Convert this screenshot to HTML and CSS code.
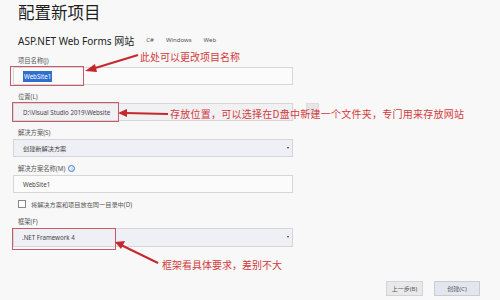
FILE: index.html
```html
<!DOCTYPE html>
<html lang="zh-CN">
<head>
    <meta charset="UTF-8">
    <title>配置新项目</title>
    <link rel="stylesheet" href="styles.css">
</head>
<body>
<div class="page">
    <h1 class="title">配置新项目</h1>
    <div class="subtitle">
        <span class="proj">ASP.NET Web Forms 网站</span>
        <span class="tag">C#</span>
        <span class="tag">Windows</span>
        <span class="tag">Web</span>
    </div>

    <div class="form">
        <div class="field">
            <div class="label">项目名称(J)</div>
            <div class="input"><span class="sel">WebSite1</span></div>
        </div>
        <div class="field">
            <div class="label">位置(L)</div>
            <div class="row">
                <div class="input gray">D:\Visual Studio 2019\Website</div>
                <div class="browse"></div>
            </div>
        </div>
        <div class="field">
            <div class="label">解决方案(S)</div>
            <div class="input select">创建新解决方案<i class="caret"></i></div>
        </div>
        <div class="field">
            <div class="label">解决方案名称(M) <span class="info">i</span></div>
            <div class="input">WebSite1</div>
        </div>
        <div class="check">
            <span class="box"></span>
            <span>将解决方案和项目放在同一目录中(D)</span>
        </div>
        <div class="field">
            <div class="label">框架(F)</div>
            <div class="input select tall">.NET Framework 4<i class="caret"></i></div>
        </div>
    </div>

    <div class="actions">
        <button class="btn back">上一步(B)</button>
        <button class="btn create">创建(C)</button>
    </div>

    <!-- annotations drawn over the screenshot -->
    <div class="frame f1"></div>
    <div class="frame f2"></div>
    <div class="frame f3"></div>
    <svg class="marks" width="500" height="300" viewBox="0 0 500 300">
        <g stroke="#c4272d" stroke-width="2" fill="#c4272d">
            <line x1="138" y1="55" x2="92" y2="69"/>
            <polygon points="85,71 95,64 97,72" stroke="none"/>
            <line x1="168" y1="114" x2="125" y2="113"/>
            <polygon points="118,113 127,109 127,117" stroke="none"/>
            <line x1="158" y1="263" x2="121" y2="245"/>
            <polygon points="115,242 125,241 121,249" stroke="none"/>
        </g>
    </svg>
    <div class="note n1">此处可以更改项目名称</div>
    <div class="note n2">存放位置，可以选择在D盘中新建一个文件夹，专门用来存放网站</div>
    <div class="note n3">框架看具体要求，差别不大</div>
</div>
</body>
</html>
```

FILE: styles.css
```css
*{
    margin: 0;
    padding: 0;
    box-sizing: border-box;
}
body{
    background: #f8f8f8;
    font-family: "Noto Sans", "Noto Sans CJK SC", sans-serif;
    color: #333;
}
.page{
    position: relative;
    width: 500px;
    height: 300px;
    padding: 2px 0 0 13px;
    overflow: hidden;
}
.title{
    font-size: 16.5px;
    font-weight: normal;
    line-height: 22px;
    color: #1e1e1e;
    padding-left: 5px;
}
.subtitle{
    display: flex;
    align-items: center;
    height: 14px;
    margin-top: 9px;
    padding-left: 5px;
}
.proj{
    font-size: 10px;
    color: #222;
}
.tag{
    font-size: 6px;
    color: #555;
    margin-left: 12px;
}
.form{
    margin-top: 7px;
}
.field{
    margin-bottom: 5px;
}
.label{
    display: flex;
    align-items: center;
    height: 13px;
    padding-left: 5px;
    font-size: 6.3px;
    color: #555;
}
.info{
    display: inline-flex;
    align-items: center;
    justify-content: center;
    width: 7px;
    height: 7px;
    margin-left: 3px;
    border: 1px solid #3a7bd5;
    border-radius: 50%;
    font-size: 5px;
    color: #3a7bd5;
}
.row{
    display: flex;
    align-items: flex-start;
}
.input{
    position: relative;
    width: 280px;
    height: 18px;
    display: flex;
    align-items: center;
    padding-left: 9px;
    background: #fbfbfb;
    border: 1px solid #d6d6d8;
    font-size: 6.2px;
    color: #444;
}
.input.gray{
    background: #f1f1f4;
}
.input.select{
    background: #eef0f5;
}
.input.tall{
    height: 19px;
    padding-left: 8px;
}
.sel{
    background: #2f6fd0;
    color: #fff;
    padding: 1px 1px;
}
.caret{
    position: absolute;
    right: 3px;
    top: 7px;
    width: 0;
    height: 0;
    border-left: 1.5px solid transparent;
    border-right: 1.5px solid transparent;
    border-top: 2px solid #333;
}
.browse{
    width: 13px;
    height: 12px;
    margin-left: 13px;
    background: #e6e6e9;
    border: 1px solid #dcdcdf;
}
.check{
    display: flex;
    align-items: center;
    height: 14px;
    margin: -1px 0 4px 5px;
    font-size: 6.2px;
    color: #555;
}
.box{
    width: 8px;
    height: 8px;
    border: 1px solid #888;
    background: #fff;
    margin-right: 5px;
}
.actions{
    display: flex;
    justify-content: flex-end;
    gap: 11px;
    margin-top: 34px;
    padding-right: 20px;
}
.btn{
    height: 15px;
    font-family: inherit;
    font-size: 6px;
    color: #555;
    background: #e9e9ec;
    border: 1px solid #d4d4d8;
}
.back{
    width: 37px;
}
.create{
    width: 46px;
    background: #e3e6ee;
    border-color: #c9ccd6;
}
.frame{
    position: absolute;
    border: 1.5px solid #c65a66;
}
.f1{
    left: 10px;
    top: 66px;
    width: 74px;
    height: 20px;
}
.f2{
    left: 12px;
    top: 102px;
    width: 107px;
    height: 20px;
}
.f3{
    left: 12px;
    top: 228px;
    width: 104px;
    height: 22px;
}
.marks{
    position: absolute;
    left: 0;
    top: 0;
}
.note{
    position: absolute;
    font-family: "Noto Sans CJK SC", sans-serif;
    font-size: 10px;
    line-height: 14px;
    color: #d23a3c;
    white-space: nowrap;
}
.n1{
    left: 140px;
    top: 50px;
}
.n2{
    left: 170px;
    top: 107px;
    letter-spacing: 0.25px;
}
.n3{
    left: 162px;
    top: 258px;
}
```
